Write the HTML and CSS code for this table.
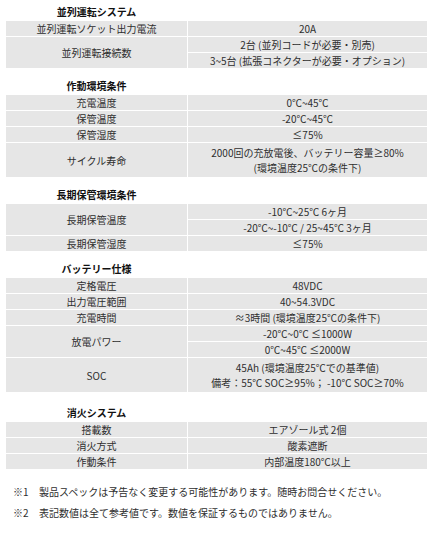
FILE: index.html
```html
<!DOCTYPE html>
<html lang="ja">
<head>
<meta charset="utf-8">
<title>仕様</title>
<link rel="stylesheet" href="styles.css">
</head>
<body>
<div class="page">
  <section class="sec">
    <div class="sec-title">並列運転システム</div>
    <div class="spec">
      <div class="k">並列運転ソケット出力電流</div><div class="v">20A</div>
      <div class="k span2">並列運転接続数</div><div class="v">2台 (並列コードが必要・別売)</div>
      <div class="v">3~5台 (拡張コネクターが必要・オプション)</div>
    </div>
  </section>

  <section class="sec">
    <div class="sec-title">作動環境条件</div>
    <div class="spec">
      <div class="k">充電温度</div><div class="v">0℃~45℃</div>
      <div class="k">保管温度</div><div class="v">-20℃~45℃</div>
      <div class="k">保管湿度</div><div class="v">≤75%</div>
      <div class="k tall">サイクル寿命</div><div class="v tall">2000回の充放電後、バッテリー容量≥80%<br>(環境温度25℃の条件下)</div>
    </div>
  </section>

  <section class="sec">
    <div class="sec-title">長期保管環境条件</div>
    <div class="spec">
      <div class="k span2">長期保管温度</div><div class="v">-10℃~25℃ 6ヶ月</div>
      <div class="v">-20℃~-10℃ / 25~45℃ 3ヶ月</div>
      <div class="k">長期保管湿度</div><div class="v">≤75%</div>
    </div>
  </section>

  <section class="sec">
    <div class="sec-title">バッテリー仕様</div>
    <div class="spec">
      <div class="k">定格電圧</div><div class="v">48VDC</div>
      <div class="k">出力電圧範囲</div><div class="v">40~54.3VDC</div>
      <div class="k">充電時間</div><div class="v">≈3時間 (環境温度25℃の条件下)</div>
      <div class="k span2">放電パワー</div><div class="v">-20℃~0℃ ≤1000W</div>
      <div class="v">0℃~45℃ ≤2000W</div>
      <div class="k tall">SOC</div><div class="v tall">45Ah (環境温度25℃での基準値)<br>備考：55℃ SOC≥95%； -10℃ SOC≥70%</div>
    </div>
  </section>

  <section class="sec sec-last">
    <div class="sec-title">消火システム</div>
    <div class="spec">
      <div class="k">搭載数</div><div class="v">エアゾール式 2個</div>
      <div class="k">消火方式</div><div class="v">酸素遮断</div>
      <div class="k">作動条件</div><div class="v">内部温度180℃以上</div>
    </div>
  </section>

  <div class="notes">
    <p class="note"><span class="mark">※1</span>製品スペックは予告なく変更する可能性があります。随時お問合せください。</p>
    <p class="note"><span class="mark">※2</span>表記数値は全て参考値です。数値を保証するものではありません。</p>
  </div>
</div>
</body>
</html>
```

FILE: styles.css
```css
html, body {
  margin: 0;
  padding: 0;
  background: #ffffff;
}

body {
  font-family: "Noto Sans CJK JP", "Noto Sans", sans-serif;
  font-size: 10px;
  color: #2e2e2e;
}

.page {
  padding: 3px 6px 0 6px;
  width: 421px;
}

.sec + .sec {
  margin-top: 9px;
}

.sec-last {
  margin-top: 12px !important;
}

.sec-title {
  width: 181px;
  height: 18px;
  line-height: 18px;
  text-align: center;
  font-weight: bold;
  color: #111111;
}

.spec {
  display: grid;
  grid-template-columns: 181px 239px;
  gap: 1px;
  background: #ffffff;
}

.k, .v {
  background: #e6e6e6;
  display: flex;
  align-items: center;
  justify-content: center;
  text-align: center;
  min-height: 15px;
  line-height: 15px;
  white-space: nowrap;
}

.span2 {
  grid-row: span 2;
}

.tall {
  min-height: 34px;
  line-height: 15px;
  padding: 2px 0;
  box-sizing: border-box;
}

.notes {
  margin-top: 12px;
  padding-left: 7px;
}

.note {
  margin: 0;
  line-height: 21px;
  white-space: nowrap;
}

.mark {
  display: inline-block;
  width: 26px;
}
```
